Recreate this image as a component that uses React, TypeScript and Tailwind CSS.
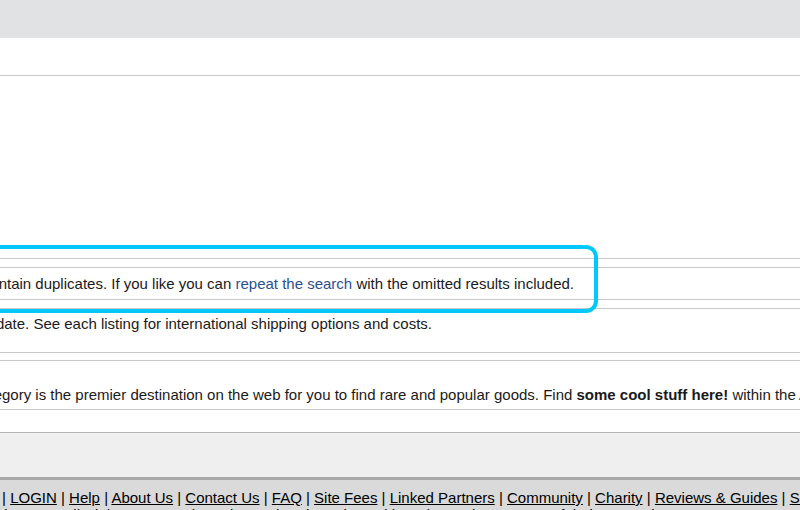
import React from "react";

const links = [
  "LOGIN",
  "Help",
  "About Us",
  "Contact Us",
  "FAQ",
  "Site Fees",
  "Linked Partners",
  "Community",
  "Charity",
  "Reviews & Guides",
  "Site Map",
];

export default function App() {
  return (
    <div className="relative w-[800px] h-[510px] overflow-hidden bg-white font-['Liberation_Sans',Arial,sans-serif] text-[15px] leading-[17px] text-[#1a1a1a]">
      <div className="h-[38px] bg-[#e1e2e4]" />
      <div className="h-[38px] border-b border-[#c8c8c8]" />
      <div className="h-[183px] border-b border-[#c8c8c8]" />
      <div className="h-[9px] border-b border-[#c8c8c8]" />
      <div className="h-[32px] border-b border-[#c8c8c8] flex items-center">
        <div className="w-[574px] flex justify-end whitespace-nowrap">
          <span>
            Some listings were omitted because they may contain duplicates. If you like you can{" "}
            <a className="text-[#2b4f8f]">repeat the search</a> with the omitted results included.
          </span>
        </div>
      </div>
      <div className="h-[9px] border-b border-[#c8c8c8]" />
      <div className="h-[44px] border-b border-[#c8c8c8] pt-[6px]">
        <div className="w-[432px] flex justify-end whitespace-nowrap">
          <span>
            Prices are estimates and exact amounts depend on the seller's location and delivery date. See each listing for international shipping options and costs.
          </span>
        </div>
      </div>
      <div className="h-[8px] border-b border-[#c8c8c8]" />
      <div className="h-[49px] border-b border-[#c8c8c8] pt-[25px] flex whitespace-nowrap">
        <div className="w-[539px] shrink-0 flex justify-end">
          <span>
            Our Collectibles category is the premier destination on the web for you to find rare and popular goods.
          </span>
        </div>
        <span className="whitespace-pre">
          {" Find "}
          <b>some cool stuff here!</b>
          {" within the Antiques & Collectibles category today."}
        </span>
      </div>
      <div className="h-[23px] border-b border-[#b4b4b4]" />
      <div className="h-[44px] bg-[#efefef]" />
      <div className="h-[3px] bg-[#a8a8a8]" />
      <div className="h-[40px] bg-[#dadada] pt-[9px] text-black">
        <div className="flex whitespace-nowrap">
          <div className="w-[6px] shrink-0 flex justify-end">
            <span>Home | Buy | Sell | My Account | Register |</span>
          </div>
          <span className="whitespace-pre">
            {links.map((l, i) => (
              <React.Fragment key={l}>
                {" "}
                <a className="underline">{l}</a>
                {i < links.length - 1 ? " |" : ""}
              </React.Fragment>
            ))}
          </span>
        </div>
        <div className="flex whitespace-nowrap">
          <div className="w-[60px] shrink-0 flex justify-end">
            <span>Copyright © 1995-2013 Marketplace Inc.</span>
          </div>
          <span className="whitespace-pre">
            {" All Rights Reserved. Designated trademarks and brands are the property of their respective owners."}
          </span>
        </div>
      </div>
      <div className="absolute left-[-20px] top-[245px] w-[618px] h-[68px] border-4 border-[#00c8fc] rounded-[12px]" />
    </div>
  );
}
